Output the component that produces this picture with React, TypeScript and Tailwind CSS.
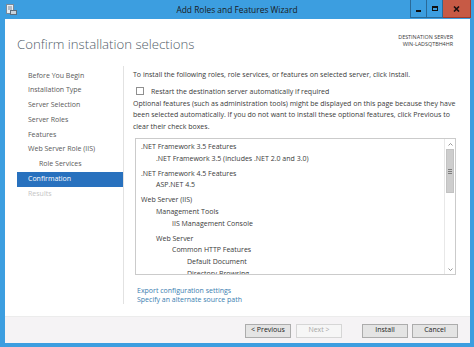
import React from "react";

const navItems: { label: string; indent?: boolean; active?: boolean; disabled?: boolean }[] = [
  { label: "Before You Begin" },
  { label: "Installation Type" },
  { label: "Server Selection" },
  { label: "Server Roles" },
  { label: "Features" },
  { label: "Web Server Role (IIS)" },
  { label: "Role Services", indent: true },
  { label: "Confirmation", active: true },
  { label: "Results", disabled: true },
];

const listItems: { text: string; level: number; gap?: boolean }[] = [
  { text: ".NET Framework 3.5 Features", level: 0 },
  { text: ".NET Framework 3.5 (includes .NET 2.0 and 3.0)", level: 1 },
  { text: ".NET Framework 4.5 Features", level: 0, gap: true },
  { text: "ASP.NET 4.5", level: 1 },
  { text: "Web Server (IIS)", level: 0, gap: true },
  { text: "Management Tools", level: 1 },
  { text: "IIS Management Console", level: 2 },
  { text: "Web Server", level: 1, gap: true },
  { text: "Common HTTP Features", level: 2 },
  { text: "Default Document", level: 3 },
  { text: "Directory Browsing", level: 3 },
];

const levelPad = ["pl-[5px]", "pl-[20px]", "pl-[36px]", "pl-[51px]"];

export default function App() {
  return (
    <div
      className="w-[474px] h-[347px] bg-[#3c9ee0] flex flex-col overflow-hidden"
      style={{ fontFamily: '"Open Sans", "Noto Sans", "Liberation Sans", sans-serif' }}
    >
      {/* Title bar */}
      <div className="h-[19px] grid grid-cols-[1fr_auto_1fr] shrink-0">
        <div className="pl-[6px] pt-[4px]">
          <svg width="11" height="11" viewBox="0 0 11 11">
            <rect x="0.5" y="0.5" width="7" height="9" fill="#e8eef4" stroke="#7a8a99" />
            <line x1="2" y1="3" x2="6" y2="3" stroke="#7a8a99" />
            <line x1="2" y1="5" x2="6" y2="5" stroke="#7a8a99" />
            <rect x="4.5" y="6.5" width="6" height="4" fill="#c9d3dc" stroke="#5d6d7c" />
          </svg>
        </div>
        <div className="text-[8.4px] leading-[19px] text-[#1a1a1a]">Add Roles and Features Wizard</div>
        <div className="flex justify-end pr-[3px] items-start">
          <div className="w-[17px] h-[18px] border border-t-0 border-[#2a6a98] flex items-end justify-center pb-[5px]">
            <div className="w-[5px] h-[2px] bg-[#111]" />
          </div>
          <div className="w-[16px] h-[18px] border-b border-r border-[#2a6a98] flex items-center justify-center">
            <div className="w-[6px] h-[5px] border border-[#111] border-t-2" />
          </div>
          <div className="w-[28px] h-[18px] bg-[#c75a45] border-b border-r border-[#9e3a2c] flex items-center justify-center">
            <svg width="7" height="6" viewBox="0 0 7 6">
              <path d="M1 0.5 L6 5.5 M6 0.5 L1 5.5" stroke="#1d1010" strokeWidth="1.6" />
            </svg>
          </div>
        </div>
      </div>

      {/* Window content */}
      <div className="ml-[5px] mr-[4px] mb-[5px] flex-1 bg-white flex flex-col">
        {/* Header */}
        <div className="h-[47px] shrink-0 flex justify-between items-start">
          <div className="pl-[12px] pt-[17px] text-[13.2px] leading-[16px] font-light text-[#52606a]">
            Confirm installation selections
          </div>
          <div className="pr-[17px] pt-[15px] text-right text-[5.4px] leading-[7px] text-[#3a3a3a]">
            <div>DESTINATION SERVER</div>
            <div>WIN-LADSQTBH4HR</div>
          </div>
        </div>

        {/* Body */}
        <div className="flex-1 flex pb-[12px] min-h-0">
          {/* Nav */}
          <div className="w-[118px] shrink-0 pl-[12px] pt-[2.6px] text-[7px] text-[#595959]">
            {navItems.map((n) => (
              <div
                key={n.label}
                className={
                  "h-[14.75px] leading-[14.75px] whitespace-nowrap " +
                  (n.active
                    ? "bg-[#2871be] text-white pl-[11px]"
                    : n.disabled
                    ? "text-[#c4c4c4] pl-[11px]"
                    : n.indent
                    ? "pl-[22px]"
                    : "pl-[11px]")
                }
              >
                {n.label}
              </div>
            ))}
          </div>
          <div className="w-px bg-[#e2e2e2] shrink-0" />

          {/* Main */}
          <div className="flex-1 pl-[9px] pr-[14px] pt-[2.5px] text-[7px] text-[#3a3a3a] flex flex-col min-w-0">
            <div className="leading-[11px]">
              To install the following roles, role services, or features on selected server, click Install.
            </div>
            <div className="mt-[6px] h-[11px] flex items-center pl-[3px]">
              <div className="w-[8px] h-[8px] border border-[#8f8f8f] bg-white" />
              <span className="ml-[7px] leading-[11px]">Restart the destination server automatically if required</span>
            </div>
            <div className="mt-[1px] leading-[11.5px]">
              Optional features (such as administration tools) might be displayed on this page because they have
              been selected automatically. If you do not want to install these optional features, click Previous to
              clear their check boxes.
            </div>

            <div className="mt-[6px] ml-[2px] h-[137px] border border-[#cbcbcb] flex shrink-0">
              <div className="flex-1 overflow-hidden pt-[2px]">
                {listItems.map((it) => (
                  <div
                    key={it.text}
                    className={
                      "leading-[11.7px] h-[11.7px] whitespace-nowrap " +
                      levelPad[it.level] +
                      (it.gap ? " mt-[3.3px]" : "")
                    }
                  >
                    {it.text}
                  </div>
                ))}
              </div>
              <div className="w-[11px] border-l border-[#e8e8e8] flex flex-col">
                <div className="h-[10px] flex items-center justify-center">
                  <svg width="5" height="3" viewBox="0 0 5 3">
                    <path d="M0.5 2.5 L2.5 0.5 L4.5 2.5" fill="none" stroke="#8a8a8a" strokeWidth="0.9" />
                  </svg>
                </div>
                <div className="h-[44px] mx-[1px] bg-[#cdcdcd] border border-[#c2c2c2] flex flex-col items-center justify-center gap-[1px]">
                  <div className="w-[4px] h-px bg-[#7d7d7d]" />
                  <div className="w-[4px] h-px bg-[#7d7d7d]" />
                  <div className="w-[4px] h-px bg-[#7d7d7d]" />
                </div>
                <div className="flex-1" />
                <div className="h-[10px] flex items-center justify-center">
                  <svg width="5" height="3" viewBox="0 0 5 3">
                    <path d="M0.5 0.5 L2.5 2.5 L4.5 0.5" fill="none" stroke="#8a8a8a" strokeWidth="0.9" />
                  </svg>
                </div>
              </div>
            </div>

            <div className="mt-[10.5px] pl-[4px] leading-[9px] text-[#3a7eb0]">
              <div>Export configuration settings</div>
              <div>Specify an alternate source path</div>
            </div>
          </div>
        </div>

        {/* Footer */}
        <div className="h-[27px] shrink-0 bg-[#f5f3f5] border-t border-[#ececec] flex items-start justify-end pt-[7px] pr-[12px] text-[7px]">
          <div className="w-[46px] h-[14px] border border-[#acacac] bg-[#e4e4e4] text-[#222] flex items-center justify-center">
            &lt; Previous
          </div>
          <div className="ml-[5px] w-[46px] h-[14px] border border-[#d6d6d6] bg-[#f6f6f6] text-[#a8a8a8] flex items-center justify-center">
            Next &gt;
          </div>
          <div className="ml-[20px] w-[46px] h-[14px] border border-[#acacac] bg-[#e4e4e4] text-[#222] flex items-center justify-center">
            Install
          </div>
          <div className="ml-[4px] w-[46px] h-[14px] border border-[#acacac] bg-[#e4e4e4] text-[#222] flex items-center justify-center">
            Cancel
          </div>
        </div>
      </div>
    </div>
  );
}
